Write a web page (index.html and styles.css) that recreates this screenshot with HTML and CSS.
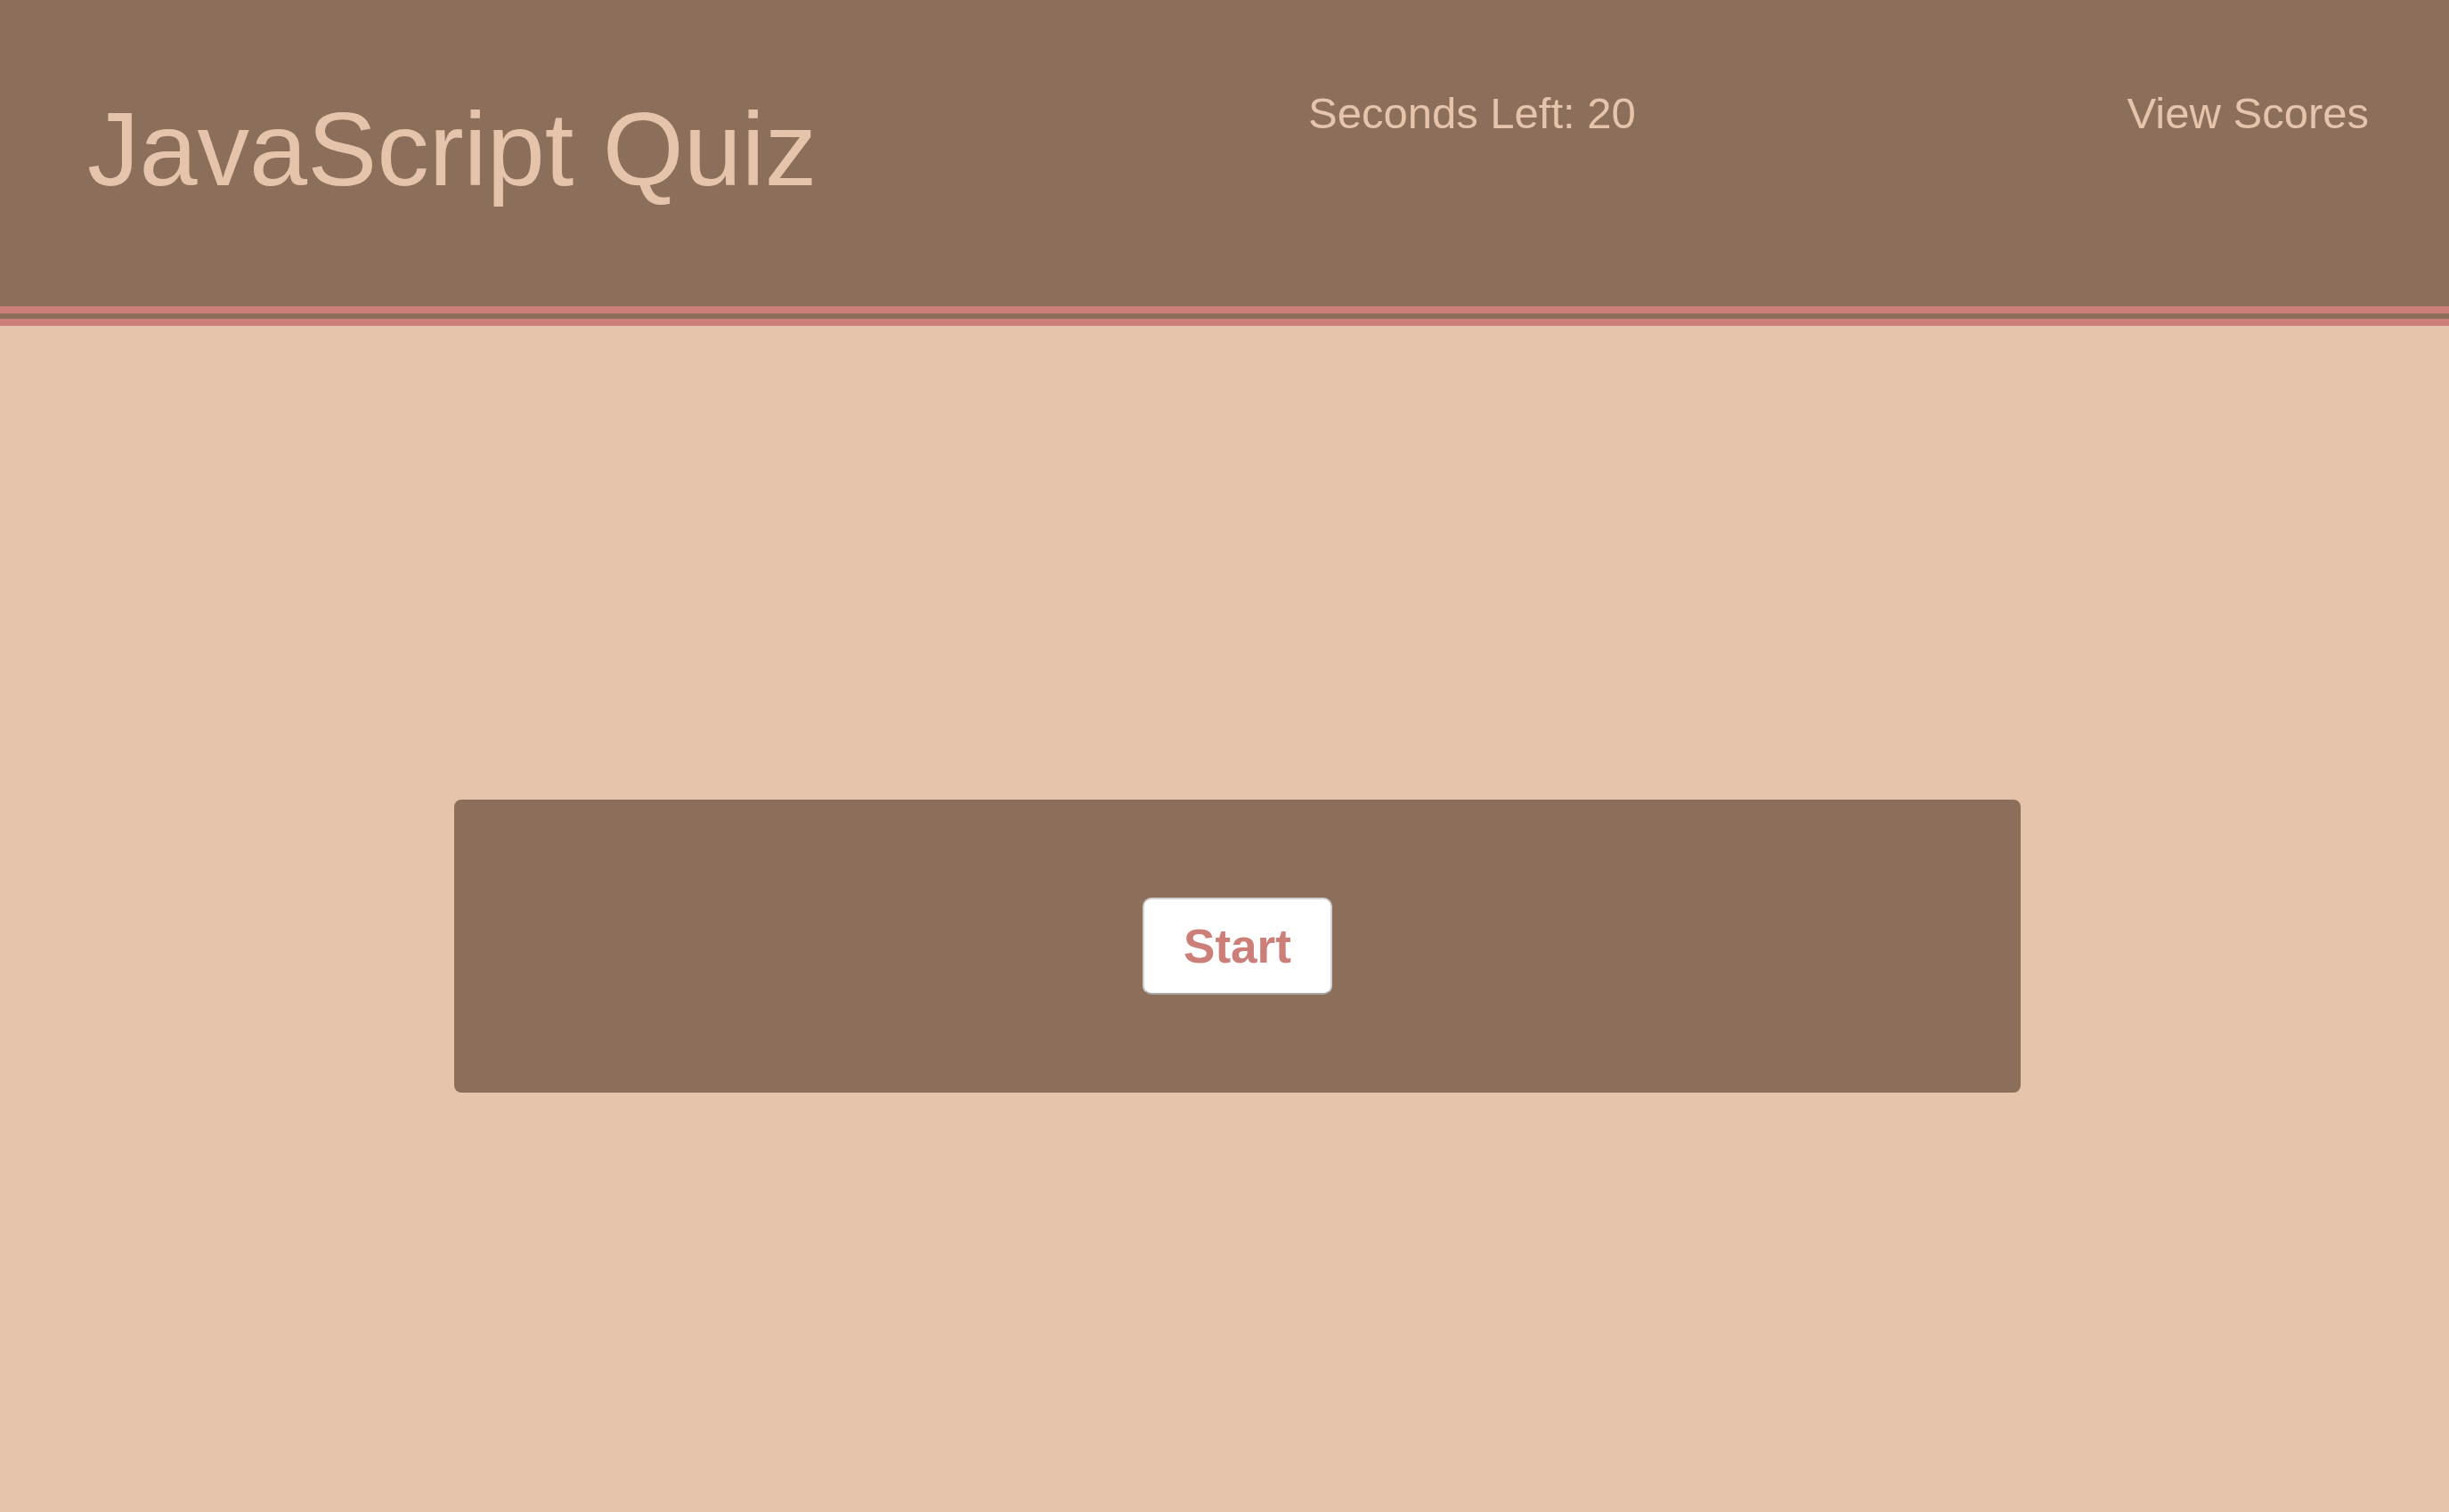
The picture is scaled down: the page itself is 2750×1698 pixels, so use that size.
FILE: index.html
```html
<!DOCTYPE html>
<html lang="en">
<head>
<meta charset="utf-8">
<title>JavaScript Quiz</title>
<link rel="stylesheet" href="styles.css">
</head>
<body>
<header class="topbar">
  <h1 class="title">JavaScript Quiz</h1>
  <div class="timer">Seconds Left: <span>20</span></div>
  <a class="scores" href="#">View Scores</a>
</header>
<div class="rule"></div>
<main class="stage">
  <section class="card">
    <button class="start" type="button">Start</button>
  </section>
</main>
</body>
</html>
```

FILE: styles.css
```css
* { box-sizing: border-box; }

html, body {
  margin: 0;
  padding: 0;
}

body {
  background: #e6c4ab;
  font-family: "Liberation Sans", Arial, sans-serif;
  color: #e6c4ab;
  min-height: 1698px;
}

.topbar {
  height: 344px;
  background: #8b6f5a;
  display: flex;
  justify-content: space-between;
  align-items: flex-start;
  padding: 100px 90px 0 98px;
}

.title {
  margin: 0;
  font-size: 117px;
  font-weight: normal;
  line-height: normal;
  color: #e6c4ab;
}

.timer,
.scores {
  font-size: 49px;
  line-height: normal;
  color: #e6c4ab;
  margin-top: -1px;
}

.scores {
  text-decoration: none;
}

.rule {
  height: 22px;
  background: #8b6f5a;
  border-top: 8px solid #cc7f78;
  border-bottom: 8px solid #cc7f78;
}

.stage {
  padding: 532px 0 0 29px;
}

.card {
  width: 1759px;
  height: 329px;
  margin: 0 auto;
  background: #8b6f5a;
  border-radius: 8px;
  display: flex;
  align-items: center;
  justify-content: center;
}

.start {
  font-family: "Liberation Sans", Arial, sans-serif;
  font-size: 53px;
  font-weight: bold;
  line-height: normal;
  color: #cc7f78;
  background: #ffffff;
  border: 2px solid #d0d0d0;
  border-bottom-color: #a8a8a8;
  border-radius: 10px;
  padding: 22px 44px;
  cursor: pointer;
}
```
